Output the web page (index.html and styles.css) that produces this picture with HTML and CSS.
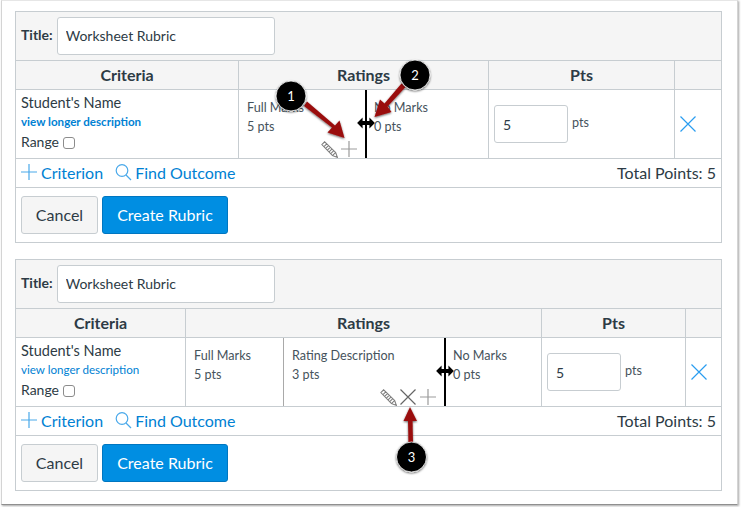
FILE: index.html
```html
<!DOCTYPE html>
<html lang="en">
<head>
    <meta charset="UTF-8">
    <title>Rubric ratings</title>
    <link rel="stylesheet" href="styles.css">
</head>
<body>

<div class="frame">

    <!-- rubric with one rating column split -->
    <form class="rubric rubric-two">
        <div class="title-row">
            <label class="title-label">Title:</label>
            <input type="text" class="title-input" value="Worksheet Rubric">
        </div>
        <div class="grid">
            <div class="head">Criteria</div>
            <div class="head">Ratings</div>
            <div class="head">Pts</div>
            <div class="head head-end"></div>

            <div class="cell criteria">
                <div class="crit-name">Student's Name</div>
                <a class="crit-link crit-link-bold">view longer description</a>
                <label class="crit-range">Range <input type="checkbox" class="check"></label>
            </div>
            <div class="cell ratings">
                <div class="rating rating-a">
                    <div class="rating-name">Full Marks</div>
                    <div class="rating-pts">5 pts</div>
                    <div class="rating-tools">
                        <svg class="tool" width="17" height="17" viewBox="0 0 16 16"><use href="#pencil"/></svg>
                        <svg class="tool" width="18" height="18" viewBox="0 0 18 18"><use href="#plus"/></svg>
                    </div>
                </div>
                <div class="rating rating-b">
                    <div class="rating-name">No Marks</div>
                    <div class="rating-pts">0 pts</div>
                </div>
            </div>
            <div class="cell points">
                <input type="text" class="pts-input" value="5">
                <span class="pts-unit">pts</span>
            </div>
            <div class="cell remove">
                <svg width="18" height="18" viewBox="0 0 18 18"><use href="#cross"/></svg>
            </div>
        </div>
        <div class="add-row">
            <a class="add-link">
                <svg width="18" height="18" viewBox="0 0 18 18"><use href="#plus"/></svg>Criterion
            </a>
            <a class="add-link">
                <svg width="17" height="18" viewBox="0 0 17 18"><use href="#search"/></svg>Find Outcome
            </a>
            <span class="total">Total Points: 5</span>
        </div>
        <div class="button-row">
            <button type="button" class="btn">Cancel</button>
            <button type="button" class="btn btn-primary">Create Rubric</button>
        </div>
    </form>

    <!-- rubric with the new rating added -->
    <form class="rubric rubric-three">
        <div class="title-row">
            <label class="title-label">Title:</label>
            <input type="text" class="title-input" value="Worksheet Rubric">
        </div>
        <div class="grid">
            <div class="head">Criteria</div>
            <div class="head">Ratings</div>
            <div class="head">Pts</div>
            <div class="head head-end"></div>

            <div class="cell criteria">
                <div class="crit-name">Student's Name</div>
                <a class="crit-link">view longer description</a>
                <label class="crit-range">Range <input type="checkbox" class="check"></label>
            </div>
            <div class="cell ratings">
                <div class="rating rating-c">
                    <div class="rating-name">Full Marks</div>
                    <div class="rating-pts">5 pts</div>
                </div>
                <div class="rating rating-d">
                    <div class="rating-name">Rating Description</div>
                    <div class="rating-pts">3 pts</div>
                    <div class="rating-tools">
                        <svg class="tool" width="17" height="17" viewBox="0 0 16 16"><use href="#pencil"/></svg>
                        <svg class="tool tool-dark" width="18" height="18" viewBox="0 0 18 18"><use href="#cross"/></svg>
                        <svg class="tool" width="18" height="18" viewBox="0 0 18 18"><use href="#plus"/></svg>
                    </div>
                </div>
                <div class="rating rating-e">
                    <div class="rating-name">No Marks</div>
                    <div class="rating-pts">0 pts</div>
                </div>
            </div>
            <div class="cell points">
                <input type="text" class="pts-input" value="5">
                <span class="pts-unit">pts</span>
            </div>
            <div class="cell remove">
                <svg width="18" height="18" viewBox="0 0 18 18"><use href="#cross"/></svg>
            </div>
        </div>
        <div class="add-row">
            <a class="add-link">
                <svg width="18" height="18" viewBox="0 0 18 18"><use href="#plus"/></svg>Criterion
            </a>
            <a class="add-link">
                <svg width="17" height="18" viewBox="0 0 17 18"><use href="#search"/></svg>Find Outcome
            </a>
            <span class="total">Total Points: 5</span>
        </div>
        <div class="button-row">
            <button type="button" class="btn">Cancel</button>
            <button type="button" class="btn btn-primary">Create Rubric</button>
        </div>
    </form>
</div>

<!-- callouts drawn on top of the screenshot -->
<svg class="callouts" width="742" height="507" viewBox="0 0 742 507">
    <defs>
        <filter id="drop" x="-30%" y="-30%" width="160%" height="160%">
            <feDropShadow dx="0" dy="1" stdDeviation="1.2" flood-color="#000" flood-opacity="0.6"/>
        </filter>
        <symbol id="plus" viewBox="0 0 18 18">
            <path d="M9 1V17M1 9H17" fill="none" stroke="currentColor" stroke-width="1.2"/>
        </symbol>
        <symbol id="cross" viewBox="0 0 18 18">
            <path d="M1.5 1.5L16.5 16.5M16.5 1.5L1.5 16.5" fill="none" stroke="currentColor" stroke-width="1.2"/>
        </symbol>
        <symbol id="search" viewBox="0 0 17 18">
            <circle cx="7" cy="7.500" r="5.800" fill="none" stroke="currentColor" stroke-width="1.2"/>
            <path d="M11 12L16 17" fill="none" stroke="currentColor" stroke-width="1.3"/>
        </symbol>
        <symbol id="pencil" viewBox="0 0 16 16">
            <path d="M0.800 3.400L3.400 0.800L13.800 10.800L15.400 15.400L10.800 13.800ZM2.800 5.400L5.400 2.800M4.400 7L7 4.400M6 8.600L8.600 6M7.600 10.200L10.200 7.600M9.200 11.800L11.800 9.200M10.800 13.800L13.800 10.800" fill="#fff" stroke="#7d7d7d" stroke-width="1"/>
        </symbol>
    </defs>

    <!-- resize handles -->
    <path d="M366 90V158M445 338V406" stroke="#000" stroke-width="2"/>
    <path d="M358 123L362 119V121.500H370V119L374 123L370 127V124.500H362V127ZM437 371L441 367V369.500H449V367L453 371L449 375V372.500H441V375Z" fill="#000" stroke="#000" stroke-width="1.2"/>

    <!-- arrows -->
    <g fill="#9a0b0b" stroke="none" filter="url(#drop)">
        <path d="M304 106L307 101.500L335 125.500L339.500 120.500L344.500 138L327.500 132.500L332 127.500Z"/>
        <path d="M405.500 87L401.500 83.500L384.500 103.500L380 99.500L374.500 117L391.500 112L387.500 106.500Z"/>
        <path d="M413 442H408.500L408 421H403.500L410 407L417 421H412.500Z"/>
    </g>

    <!-- numbered markers -->
    <g filter="url(#drop)" fill="#000" stroke="#fff" stroke-width="0.8">
        <circle cx="291" cy="96" r="15"/>
        <circle cx="415" cy="75" r="15"/>
        <circle cx="411.500" cy="457" r="15"/>
    </g>
    <g class="marker-num" text-anchor="middle">
        <text x="291" y="101">1</text>
        <text x="415" y="80">2</text>
        <text x="411.500" y="462">3</text>
    </g>
</svg>

</body>
</html>
```
FILE: styles.css
```css
* {
    box-sizing: border-box;
}
body {
    margin: 0;
    width: 742px;
    height: 507px;
    overflow: hidden;
    position: relative;
    background-color: #fff;
    font-family: 'Lato', 'Open Sans', sans-serif;
    color: #2d3b45;
}
.frame {
    width: 737px;
    height: 505px;
    margin-left: 1px;
    padding: 10px 15px 0 13px;
    background-color: #fff;
    border: 1px solid #d4d4d4;
    border-top-color: #e6e6e6;
    border-bottom: 1px solid #8f8f8f;
    box-shadow: 1px 1px 2px rgba(0, 0, 0, 0.35);
    display: flex;
    flex-direction: column;
    gap: 16px;
}
.rubric {
    width: 707px;
    height: 232px;
    border: 1px solid #c7cdd1;
    display: flex;
    flex-direction: column;
}
.title-row {
    height: 49px;
    background-color: #f5f5f5;
    border-bottom: 1px solid #c7cdd1;
    display: flex;
    align-items: center;
    padding: 0 5px;
    gap: 4px;
}
.title-label {
    font-size: 14px;
    font-weight: bold;
    margin-bottom: 3px;
}
.title-input {
    width: 218px;
    height: 38px;
    padding: 0 8px 2px;
    border: 1px solid #c7cdd1;
    border-radius: 3px;
    background-color: #fff;
    font-family: inherit;
    font-size: 14px;
    color: #2d3b45;
}
.grid {
    display: grid;
    grid-template-rows: 29px 69px;
}
.rubric-two .grid {
    grid-template-columns: 223px 250px 186px 46px;
}
.rubric-three .grid {
    grid-template-columns: 170px 356px 144px 35px;
}
.head {
    background-color: #f5f5f5;
    border-right: 1px solid #c7cdd1;
    border-bottom: 1px solid #c7cdd1;
    font-size: 16px;
    font-weight: bold;
    line-height: 28px;
    text-align: center;
}
.head-end,
.cell:last-child {
    border-right: none;
}
.cell {
    border-right: 1px solid #c7cdd1;
    border-bottom: 1px solid #c7cdd1;
}
.criteria {
    padding: 3px 5px 0;
}
.crit-name {
    font-size: 14.500px;
    line-height: 20px;
}
.crit-link {
    display: block;
    font-size: 11.600px;
    line-height: 17px;
    color: #0081d3;
}
.crit-link-bold {
    font-weight: bold;
}
.crit-range {
    display: flex;
    align-items: center;
    gap: 4px;
    font-size: 14px;
    line-height: 21px;
    margin-top: 1px;
}
.check {
    width: 12px;
    height: 12px;
    margin: 2px 0 0;
    appearance: none;
    border: 1px solid #8c8c8c;
    border-radius: 3px;
    background-color: #fff;
}
.ratings {
    display: flex;
}
.rating {
    padding: 8px 8px 0;
    font-size: 12.600px;
    line-height: 19px;
    color: #46535c;
    display: flex;
    flex-direction: column;
}
.rating-a {
    width: 127px;
}
.rating-b {
    flex: 1;
}
.rating-c {
    width: 98px;
    border-right: 1px solid #a9a9a9;
}
.rating-d {
    width: 161px;
}
.rating-e {
    flex: 1;
}
.rating-tools {
    margin-top: auto;
    display: flex;
    justify-content: flex-end;
    align-items: center;
    gap: 2px;
    color: #9b9b9b;
}
.tool-dark {
    color: #666;
}
.points {
    display: flex;
    align-items: center;
    gap: 4px;
    padding: 0 5px;
}
.pts-input {
    width: 74px;
    height: 38px;
    padding: 0 8px;
    border: 1px solid #c7cdd1;
    border-radius: 3px;
    font-family: inherit;
    font-size: 14px;
    color: #2d3b45;
}
.pts-unit {
    font-size: 12.600px;
    color: #46535c;
    margin-bottom: 3px;
}
.remove {
    display: flex;
    align-items: center;
    padding-left: 4px;
    color: #2a9df0;
}
.add-row {
    height: 29px;
    padding: 0 5px 2px 4px;
    border-bottom: 1px solid #c7cdd1;
    display: flex;
    align-items: center;
    gap: 12px;
    font-size: 16px;
}
.add-link {
    display: flex;
    align-items: center;
    gap: 3px;
    color: #0081d3;
}
.add-link svg {
    color: #4aa9ea;
}
.total {
    margin-left: auto;
    font-size: 16px;
}
.button-row {
    padding: 8px 5px 0;
    display: flex;
    gap: 4px;
}
.btn {
    height: 38px;
    width: 77px;
    padding: 0 0 2px;
    background-color: #f5f5f5;
    border: 1px solid #c7cdd1;
    border-radius: 3px;
    font-family: inherit;
    font-size: 16px;
    color: #2d3b45;
}
.btn-primary {
    width: 126px;
    background-color: #008ee2;
    border-color: #0076c0;
    color: #fff;
}
.callouts {
    position: absolute;
    left: 0;
    top: 0;
}
.marker-num {
    font-family: 'Lato', sans-serif;
    font-size: 13px;
    fill: #fff;
}
```
